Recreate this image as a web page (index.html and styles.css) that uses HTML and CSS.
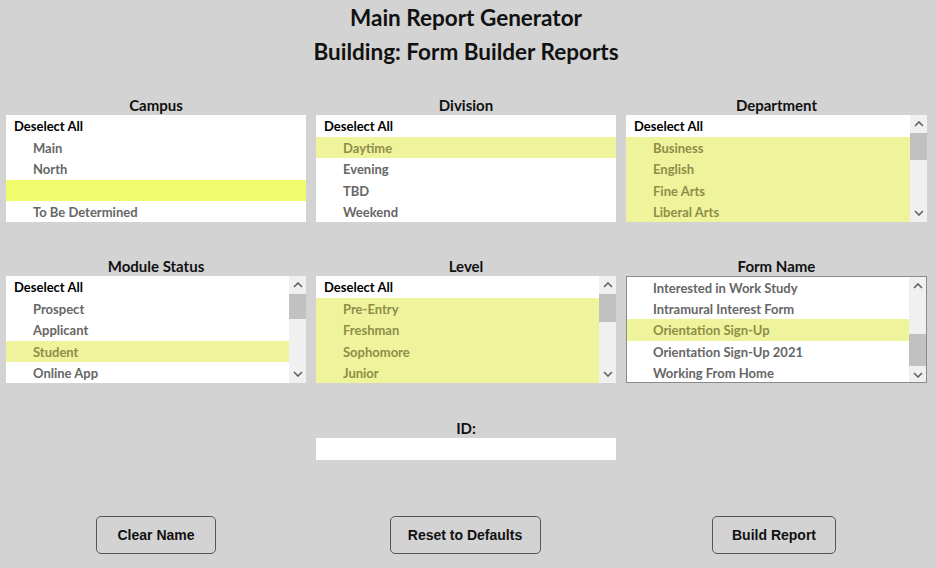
FILE: index.html
```html
<!DOCTYPE html>
<html>
<head>
<meta charset="utf-8">
<link rel="stylesheet" href="styles.css">
</head>
<body>
<div class="page">
  <header class="header">
    <div class="title">Main Report Generator</div>
    <div class="title">Building: Form Builder Reports</div>
  </header>

  <div class="grid">
    <section class="field">
      <div class="label">Campus</div>
      <div class="box">
        <div class="rows">
          <div class="row all">Deselect All</div>
          <div class="row">Main</div>
          <div class="row">North</div>
          <div class="row bright"></div>
          <div class="row">To Be Determined</div>
        </div>
      </div>
    </section>

    <section class="field">
      <div class="label">Division</div>
      <div class="box">
        <div class="rows">
          <div class="row all">Deselect All</div>
          <div class="row sel">Daytime</div>
          <div class="row">Evening</div>
          <div class="row">TBD</div>
          <div class="row">Weekend</div>
        </div>
      </div>
    </section>

    <section class="field">
      <div class="label">Department</div>
      <div class="box">
        <div class="rows">
          <div class="row all">Deselect All</div>
          <div class="row sel">Business</div>
          <div class="row sel">English</div>
          <div class="row sel">Fine Arts</div>
          <div class="row sel">Liberal Arts</div>
        </div>
        <div class="sb">
          <div class="sb-btn"><svg width="10" height="6" viewBox="0 0 10 6"><path d="M1 5 L5 1 L9 5" fill="none" stroke="#606060" stroke-width="1.6"/></svg></div>
          <div class="sb-track"><div class="thumb t-dept"></div></div>
          <div class="sb-btn"><svg width="10" height="6" viewBox="0 0 10 6"><path d="M1 1 L5 5 L9 1" fill="none" stroke="#606060" stroke-width="1.6"/></svg></div>
        </div>
      </div>
    </section>

    <section class="field">
      <div class="label">Module Status</div>
      <div class="box">
        <div class="rows">
          <div class="row all">Deselect All</div>
          <div class="row">Prospect</div>
          <div class="row">Applicant</div>
          <div class="row sel">Student</div>
          <div class="row">Online App</div>
        </div>
        <div class="sb">
          <div class="sb-btn"><svg width="10" height="6" viewBox="0 0 10 6"><path d="M1 5 L5 1 L9 5" fill="none" stroke="#606060" stroke-width="1.6"/></svg></div>
          <div class="sb-track"><div class="thumb t-mod"></div></div>
          <div class="sb-btn"><svg width="10" height="6" viewBox="0 0 10 6"><path d="M1 1 L5 5 L9 1" fill="none" stroke="#606060" stroke-width="1.6"/></svg></div>
        </div>
      </div>
    </section>

    <section class="field">
      <div class="label">Level</div>
      <div class="box">
        <div class="rows">
          <div class="row all">Deselect All</div>
          <div class="row sel">Pre-Entry</div>
          <div class="row sel">Freshman</div>
          <div class="row sel">Sophomore</div>
          <div class="row sel">Junior</div>
        </div>
        <div class="sb">
          <div class="sb-btn"><svg width="10" height="6" viewBox="0 0 10 6"><path d="M1 5 L5 1 L9 5" fill="none" stroke="#606060" stroke-width="1.6"/></svg></div>
          <div class="sb-track"><div class="thumb t-level"></div></div>
          <div class="sb-btn"><svg width="10" height="6" viewBox="0 0 10 6"><path d="M1 1 L5 5 L9 1" fill="none" stroke="#606060" stroke-width="1.6"/></svg></div>
        </div>
      </div>
    </section>

    <section class="field">
      <div class="label">Form Name</div>
      <div class="box focus">
        <div class="rows">
          <div class="row">Interested in Work Study</div>
          <div class="row">Intramural Interest Form</div>
          <div class="row sel">Orientation Sign-Up</div>
          <div class="row">Orientation Sign-Up 2021</div>
          <div class="row">Working From Home</div>
        </div>
        <div class="sb">
          <div class="sb-btn"><svg width="10" height="6" viewBox="0 0 10 6"><path d="M1 5 L5 1 L9 5" fill="none" stroke="#606060" stroke-width="1.6"/></svg></div>
          <div class="sb-track"><div class="thumb t-form"></div></div>
          <div class="sb-btn"><svg width="10" height="6" viewBox="0 0 10 6"><path d="M1 1 L5 5 L9 1" fill="none" stroke="#606060" stroke-width="1.6"/></svg></div>
        </div>
      </div>
    </section>

    <section class="field idfield">
      <div class="label">ID:</div>
      <div class="input"></div>
    </section>
  </div>

  <div class="actions">
    <div class="btncell"><button class="btn b1">Clear Name</button></div>
    <div class="btncell"><button class="btn b2">Reset to Defaults</button></div>
    <div class="btncell"><button class="btn b3">Build Report</button></div>
  </div>
</div>
</body>
</html>
```

FILE: styles.css
```css
html, body {
  margin: 0;
  padding: 0;
  background: #d3d3d3;
}
body {
  width: 936px;
  height: 568px;
  overflow: hidden;
  font-family: "Lato", "Liberation Sans", sans-serif;
}
.page {
  padding: 1px 0 0 6px;
}
.header {
  display: flex;
  flex-direction: column;
  align-items: center;
  width: 920px;
}
.title {
  font-size: 22.5px;
  font-weight: 700;
  line-height: 34px;
  color: #111;
}
.grid {
  margin-top: 26px;
  display: grid;
  grid-template-columns: 300px 300px 301px;
  column-gap: 10px;
  row-gap: 34px;
}
.field {
  display: flex;
  flex-direction: column;
}
.label {
  height: 20px;
  line-height: 21px;
  text-align: center;
  font-size: 15px;
  font-weight: 700;
  color: #111;
}
.box {
  height: 107px;
  background: #fff;
  display: flex;
  overflow: hidden;
  box-sizing: border-box;
}
.box.focus {
  border: 1px solid #8a8a8a;
}
.rows {
  flex: 1;
  display: flex;
  flex-direction: column;
}
.row {
  height: 21.5px;
  line-height: 23px;
  flex: none;
  padding-left: 27px;
  font-size: 13px;
  font-weight: 700;
  color: #666;
  white-space: nowrap;
}
.focus .row {
  padding-left: 26px;
}
.focus .row:first-child {
  height: 20.5px;
}
.row.all {
  padding-left: 8px;
  color: #000;
}
.row.sel {
  background: #eef39c;
  color: #8e8e48;
}
.row.bright {
  background: #f1fc6c;
}
.sb {
  width: 17px;
  flex: none;
  background: #f0f0f0;
  display: flex;
  flex-direction: column;
}
.sb-btn {
  height: 18px;
  flex: none;
  display: flex;
  align-items: center;
  justify-content: center;
}
.sb-track {
  flex: 1;
  display: flex;
  flex-direction: column;
}
.thumb {
  background: #c1c1c1;
  height: 27px;
}
.t-dept { height: 27px; }
.t-mod { height: 25px; }
.t-level { height: 28px; }
.t-form { margin-top: 39px; height: 32px; }
.idfield {
  grid-column: 2;
  margin-top: 1px;
}
.input {
  height: 22px;
  background: #fff;
}
.actions {
  margin-top: 56px;
  display: grid;
  grid-template-columns: 300px 300px 301px;
  column-gap: 10px;
}
.btncell {
  display: flex;
  justify-content: center;
}
.btn {
  height: 38px;
  border: 1px solid #555;
  border-radius: 5px;
  background: #d3d3d3;
  font-family: "Liberation Sans", Arial, sans-serif;
  font-size: 14px;
  font-weight: 700;
  color: #111;
  padding: 0;
}
.b1 { width: 120px; }
.b2 { width: 151px; margin-left: -2px; }
.b3 { width: 124px; margin-left: -5px; }
```
